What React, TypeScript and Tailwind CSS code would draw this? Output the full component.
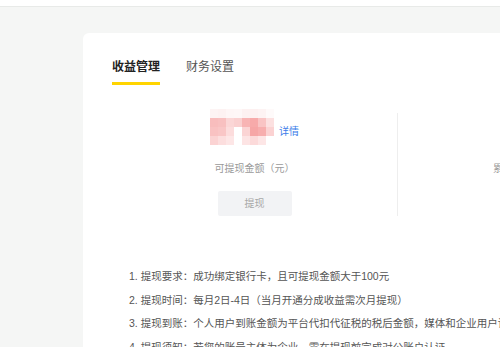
const mosaic: string[][] = [
  ["bg-[#fdf4f4]", "bg-[#fdf2f2]", "bg-[#fef6f6]", "bg-[#fef7f7]", "bg-[#fdf1f1]", "bg-[#fdf0f0]", "bg-[#fdf3f3]", "bg-[#fefafa]"],
  ["bg-[#f8bdbd]", "bg-[#f8c0c0]", "bg-[#fbd6d6]", "bg-[#fad0d0]", "bg-[#f8b4b4]", "bg-[#f7aaaa]", "bg-[#f9c4c4]", "bg-[#fce0e0]"],
  ["bg-[#f9c2c2]", "bg-[#f9c6c6]", "bg-[#fcdcdc]", "bg-white", "bg-[#fbd4d4]", "bg-[#f6a6a6]", "bg-[#f7aeae]", "bg-[#fbd2d2]"],
  ["bg-[#fbd3d3]", "bg-[#fcdede]", "bg-[#fde6e6]", "bg-white", "bg-[#fde4e4]", "bg-[#fcdada]", "bg-[#fde6e6]", "bg-white"],
];

const rules = [
  "1. 提现要求：成功绑定银行卡，且可提现金额大于100元",
  "2. 提现时间：每月2日-4日（当月开通分成收益需次月提现）",
  "3. 提现到账：个人用户到账金额为平台代扣代征税的税后金额，媒体和企业用户请开具发票",
  "4. 提现须知：若您的账号主体为企业，需在提现前完成对公账户认证",
];

function Stat({ width, label, amount, withButton }: { width: string; label: string; amount?: string; withButton?: boolean }) {
  return (
    <div className={`${width} flex flex-col items-center shrink-0`}>
      <div className="flex items-center h-[36px]">
        {amount ? (
          <span className="text-[22px] text-[#333]">{amount}</span>
        ) : (
          <>
            <div className="flex flex-col">
              {mosaic.map((row, i) => (
                <div key={i} className="flex">
                  {row.map((c, j) => (
                    <div key={j} className={`w-[8px] h-[9px] ${c}`} />
                  ))}
                </div>
              ))}
            </div>
            <span className="ml-[5px] mt-[10px] text-[10px] leading-[14px] text-[#3b7de9]">详情</span>
          </>
        )}
      </div>
      <div className="mt-[16px] text-[10px] leading-[16px] text-[#9a9a9a]">{label}</div>
      {withButton && (
        <button className="mt-[14px] w-[74px] h-[25px] rounded-[2px] bg-[#f2f3f5] text-[10px] text-[#a8a8a8]">
          提现
        </button>
      )}
    </div>
  );
}

export default function App() {
  return (
    <div className="w-[500px] h-[347px] overflow-hidden bg-[#f5f6f5] font-['Liberation_Sans','Noto_Sans_CJK_SC',sans-serif]">
      <div className="h-[7px] bg-white border-b border-[#e8eae8]" />
      <div className="pt-[26px] pl-[83px]">
        <div className="w-[700px] min-h-[320px] bg-white rounded-tl-[6px] pl-[29px] pt-[24px]">
          <div className="flex gap-[26px]">
            <div className="flex flex-col">
              <span className="text-[12px] leading-[20px] font-bold text-[#222]">收益管理</span>
              <div className="mt-[5px] h-[3px] bg-[#ffd400]" />
            </div>
            <span className="text-[12px] leading-[20px] text-[#555]">财务设置</span>
          </div>

          <div className="flex items-start mt-[24px]">
            <Stat width="w-[285px]" label="可提现金额（元）" withButton />
            <div className="w-px h-[103px] mt-[4px] bg-[#eeeeee]" />
            <Stat width="w-[280px]" label="累计提现金额（元）" amount="0.00" />
          </div>

          <ul className="mt-[49px] pl-[17px] text-[10.5px] leading-[23.5px] text-[#555] whitespace-nowrap">
            {rules.map((r) => (
              <li key={r}>{r}</li>
            ))}
          </ul>
        </div>
      </div>
    </div>
  );
}
